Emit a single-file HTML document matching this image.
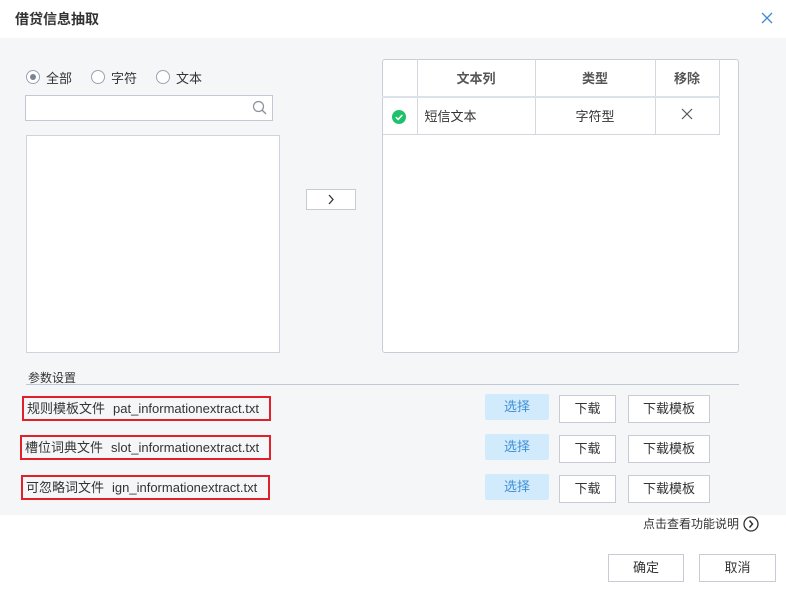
<!DOCTYPE html>
<html><head><meta charset="utf-8"><style>
*{box-sizing:border-box;margin:0;padding:0}
body{width:786px;height:590px;background:#fff;font-family:"Liberation Sans","Noto Sans CJK SC",sans-serif;font-size:13px;color:#333;position:relative;overflow:hidden}
.a{position:absolute}
.gray{left:0;top:38px;width:786px;height:477px;background:#f5f6f8}
.radio{width:14px;height:14px;border:1px solid #9aa3b5;border-radius:50%;background:#fff}
.btn{border:1px solid #c8cbd3;background:#fff;text-align:center;font-size:13px;color:#333}
.sel{background:#d2ebfc;color:#3f8fd6;text-align:center;border-radius:2px}
.red{border:2px solid #e0202a;height:25px;font-size:13px;line-height:21px;padding-left:3px;color:#333;white-space:nowrap}
.red span{margin-left:8px}
td{border:1px solid #d4d7de;text-align:center;font-size:13px}
</style></head><body>
<div class="a" style="left:15px;top:9px;font-size:14px;font-weight:bold;color:#333">借贷信息抽取</div>
<svg class="a" style="left:761px;top:12px" width="12" height="12"><path d="M1 1L11 11M11 1L1 11" stroke="#3d8ad0" stroke-width="1.3"/></svg>
<div class="a gray"></div>
<div class="a radio" style="left:26px;top:70px"></div><div class="a" style="left:30px;top:74px;width:6px;height:6px;border-radius:50%;background:#7b8494"></div>
<div class="a" style="left:46px;top:68px">全部</div>
<div class="a radio" style="left:91px;top:70px"></div><div class="a" style="left:111px;top:68px">字符</div>
<div class="a radio" style="left:156px;top:70px"></div><div class="a" style="left:176px;top:68px">文本</div>
<div class="a" style="left:25px;top:95px;width:248px;height:26px;background:#fff;border:1px solid #c3c8d4"></div>
<svg class="a" style="left:252px;top:100px" width="16" height="16"><circle cx="6.5" cy="6.5" r="5" fill="none" stroke="#8a909c" stroke-width="1.2"/><path d="M10 10L14 14" stroke="#8a909c" stroke-width="1.3"/></svg>
<div class="a" style="left:26px;top:135px;width:254px;height:218px;background:#fff;border:1px solid #cfd3db"></div>
<div class="a btn" style="left:306px;top:189px;width:50px;height:21px"></div>
<svg class="a" style="left:327px;top:194px" width="8" height="11"><path d="M2 1L6 5.5L2 10" fill="none" stroke="#333" stroke-width="1.3"/></svg>
<div class="a" style="left:382px;top:59px;width:357px;height:294px;background:#fff;border:1px solid #c8ccd4;border-radius:3px"></div>
<table class="a" style="left:382px;top:59px;border-collapse:collapse">
<tr style="height:38px;font-weight:bold;color:#555"><td style="width:35px;border-left:none;border-top:none"></td><td style="width:118px;border-top:none">文本列</td><td style="width:120px;border-top:none">类型</td><td style="width:64px;border-top:none">移除</td></tr>
<tr style="height:37px;border-top:2px solid #dde1ea"><td style="border-left:none"><svg width="14" height="14" style="vertical-align:middle"><circle cx="7" cy="7" r="7" fill="#1ec26a"/><path d="M3.8 7.2L6.2 9.4L10.3 5" fill="none" stroke="#fff" stroke-width="1.6"/></svg></td><td style="text-align:left;padding-left:7px">短信文本</td><td>字符型</td><td><svg width="12" height="12"><path d="M1 1L11 11M11 1L1 11" stroke="#555" stroke-width="1.2"/></svg></td></tr>
</table>
<div class="a" style="left:28px;top:369px;font-size:12px">参数设置</div>
<div class="a" style="left:26px;top:384px;width:713px;height:1px;background:#c2c7d6"></div>
<div class="a red" style="left:22px;top:396px;width:249px">规则模板文件<span>pat_informationextract.txt</span></div>
<div class="a red" style="left:20px;top:435px;width:251px">槽位词典文件<span>slot_informationextract.txt</span></div>
<div class="a red" style="left:21px;top:475px;width:249px">可忽略词文件<span>ign_informationextract.txt</span></div>
<div class="a sel" style="left:485px;top:394px;width:64px;height:26px;line-height:26px">选择</div>
<div class="a btn" style="left:559px;top:395px;width:57px;height:28px;line-height:26px">下载</div>
<div class="a btn" style="left:628px;top:395px;width:82px;height:28px;line-height:26px">下载模板</div>
<div class="a sel" style="left:485px;top:434px;width:64px;height:26px;line-height:26px">选择</div>
<div class="a btn" style="left:559px;top:435px;width:57px;height:28px;line-height:26px">下载</div>
<div class="a btn" style="left:628px;top:435px;width:82px;height:28px;line-height:26px">下载模板</div>
<div class="a sel" style="left:485px;top:474px;width:64px;height:26px;line-height:26px">选择</div>
<div class="a btn" style="left:559px;top:475px;width:57px;height:28px;line-height:26px">下载</div>
<div class="a btn" style="left:628px;top:475px;width:82px;height:28px;line-height:26px">下载模板</div>
<div class="a" style="left:643px;top:515px;font-size:12px">点击查看功能说明</div>
<svg class="a" style="left:743px;top:516px" width="16" height="16"><circle cx="8" cy="8" r="7" fill="none" stroke="#333" stroke-width="1.3"/><path d="M6.5 4.5L9.5 8L6.5 11.5" fill="none" stroke="#333" stroke-width="1.5"/></svg>
<div class="a btn" style="left:608px;top:554px;width:76px;height:28px;line-height:26px">确定</div>
<div class="a btn" style="left:699px;top:554px;width:77px;height:28px;line-height:26px">取消</div>
</body></html>
